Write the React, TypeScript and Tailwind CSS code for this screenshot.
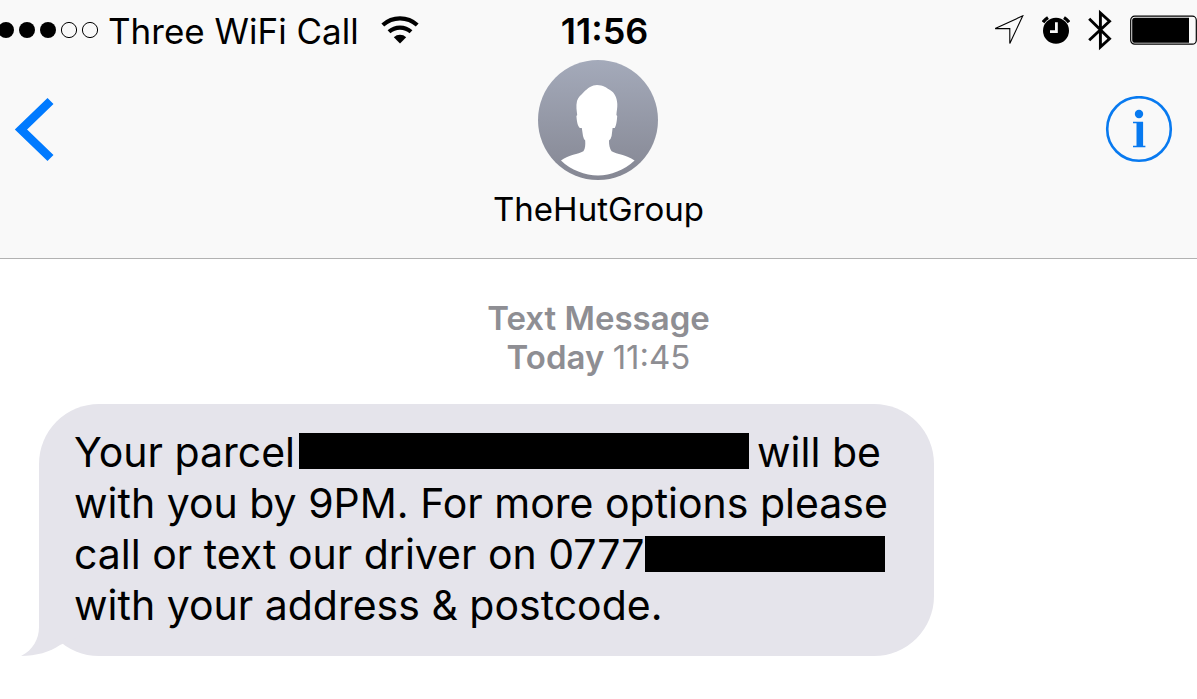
import React from "react";

function SignalDots() {
  return (
    <svg width="98" height="18" viewBox="0 0 98 18" role="img" aria-label="Signal strength, 3 of 5">
      <circle cx="6" cy="9" r="8" />
      <circle cx="27" cy="9" r="8" />
      <circle cx="48" cy="9" r="8" />
      <circle cx="69" cy="9" r="7.6" fill="none" stroke="#000" strokeWidth="1" />
      <circle cx="90" cy="9" r="7.6" fill="none" stroke="#000" strokeWidth="1" />
    </svg>
  );
}

function WifiIcon() {
  return (
    <svg width="38" height="28" viewBox="0 0 38 28" role="img" aria-label="WiFi">
      <path d="M1.8 9A25.5 25.5 0 0 1 36.2 9" fill="none" stroke="#000" strokeWidth="4.2" />
      <path d="M8 15.8A16.5 16.5 0 0 1 30 15.8" fill="none" stroke="#000" strokeWidth="4.2" />
      <path d="M19 27.4L12.8 21.2A9.4 9.4 0 0 1 25.2 21.2Z" />
    </svg>
  );
}

function LocationIcon() {
  return (
    <svg width="30" height="30" viewBox="0 0 30 30" role="img" aria-label="Location">
      <path d="M1.2 13.6L28.8 .8L15.8 28.4V13.6Z" fill="none" stroke="#000" strokeWidth="1.1" />
    </svg>
  );
}

function AlarmIcon() {
  return (
    <svg width="28" height="28" viewBox="0 0 28 28" role="img" aria-label="Alarm">
      <circle cx="14" cy="14.8" r="13" />
      <path d="M1 6.2A18 18 0 0 1 6 1.6M27 6.2A18 18 0 0 0 22 1.6" fill="none" stroke="#000" strokeWidth="3.4" />
      <path d="M14.4 6.2V15.6H8" fill="none" stroke="#f9f9f9" strokeWidth="2.8" />
    </svg>
  );
}

function BluetoothIcon() {
  return (
    <svg width="24" height="42" viewBox="0 0 24 42" role="img" aria-label="Bluetooth">
      <path d="M1.2 9.8L21.5 29.8L12.4 38V4L21.5 12.2L1.2 31.2" fill="none" stroke="#000" strokeWidth="2.9" />
    </svg>
  );
}

function BatteryIcon() {
  return (
    <svg width="67" height="30" viewBox="0 0 67 30" role="img" aria-label="Battery">
      <rect x=".7" y="1.2" width="65.6" height="28" rx="4" fill="none" stroke="#000" strokeWidth="1.2" />
      <path d="M5 2.7H59V27.7H5Q2.2 27.7 2.2 24.9V5.5Q2.2 2.7 5 2.7Z" />
    </svg>
  );
}

function Avatar() {
  return (
    <svg width="120" height="120" viewBox="0 0 120 120" role="img" aria-label="Contact photo">
      <defs>
        <linearGradient id="avatarFill" x1="0" y1="0" x2="0" y2="1">
          <stop offset="0" stopColor="#a4aaba" />
          <stop offset="1" stopColor="#858793" />
        </linearGradient>
      </defs>
      <circle cx="60" cy="60" r="60" fill="url(#avatarFill)" />
      <path
        fill="#fff"
        d="M59 25C65 25 69 28 72 30C77 33 79 38 79.3 44C79.5 48 78.6 51 78.4 55L79.2 56C79 61 78 66 76.8 68H74.6L73.6 76Q73 79 71 80.4C71 85 71.6 88 73.6 91.2C79 94.4 88 94.6 96.6 100.4C86 110 73 115.4 60 115.4C47 115.4 33 110 23 100.4C31 94.6 40 94.4 45.4 91.2C47.4 88 47.4 85 47.2 80.4Q45.6 79 45 76L43.8 68H41.8C39.6 66 38.8 61 38.4 56L39.2 55C38.8 51 37.8 46 39 41C40 37 43 35 45.4 32.4C50 28 54 25 59 25Z"
      />
    </svg>
  );
}

export default function App() {
  return (
    <div className="min-h-screen bg-white font-['Inter','Liberation_Sans',sans-serif] text-black">
      <header className="border-b border-[#b2b2b2] bg-[#f9f9f9]">
        <div className="grid h-15 grid-cols-[1fr_auto_1fr] items-center text-[35px] leading-10 whitespace-nowrap">
          <div className="flex items-center gap-2.5">
            <SignalDots />
            <span className="pt-0.5">Three WiFi Call</span>
            <span className="pl-3">
              <WifiIcon />
            </span>
          </div>
          <time className="pt-0.5 pl-3 text-4xl leading-10 font-semibold">11:56</time>
          <div className="flex items-center justify-end gap-4.5">
            <LocationIcon />
            <AlarmIcon />
            <BluetoothIcon />
            <BatteryIcon />
          </div>
        </div>

        <div className="grid grid-cols-[1fr_auto_1fr] items-start">
          <button type="button" aria-label="Back" className="mt-9 ml-3.5 justify-self-start">
            <svg width="40" height="66" viewBox="0 0 40 66">
              <path d="M36.5 5L7 33.5L36.5 62" fill="none" stroke="#007aff" strokeWidth="8.6" />
            </svg>
          </button>
          <div className="flex flex-col items-center gap-2 pb-7">
            <Avatar />
            <h1 className="text-[33px] leading-[42px]">TheHutGroup</h1>
          </div>
          <button type="button" aria-label="Details" className="mt-9 mr-6 justify-self-end">
            <svg width="68" height="68" viewBox="0 0 68 68" fill="none" stroke="#087af0">
              <circle cx="34" cy="33" r="31.8" strokeWidth="2.6" />
              <circle cx="34" cy="18" r="4.2" fill="#087af0" stroke="none" />
              <path d="M34.8 26V50.5" strokeWidth="6.6" />
              <path d="M28 26.6H38M28 50.4H40.4" strokeWidth="1.5" />
            </svg>
          </button>
        </div>
      </header>

      <main>
        <p className="pt-10 text-center text-[33px] leading-[39px] font-semibold text-[#8e8e93]">
          Text Message
          <br />
          Today <time className="font-normal">11:45</time>
        </p>

        <div className="relative mt-[27px] ml-[39px] w-fit rounded-[60px] bg-[#e5e4eb] pt-[23px] pr-[46px] pb-[25px] pl-[35px]">
          <svg className="absolute bottom-0 -left-4.5" width="60" height="60" viewBox="0 0 60 60" aria-hidden="true">
            <path d="M18 0V31C18 43 12 54 0 60C15 60 29 56 39 49L60 40V0Z" fill="#e5e4eb" />
          </svg>
          <p className="relative text-[41px] leading-[51px] whitespace-nowrap">
            Your parcel
            <span className="mr-2 ml-1 inline-block h-9 w-[450px] bg-black align-[-2px]" />
            will be
            <br />
            with you by 9PM. For more options please
            <br />
            call or text our driver on 0777
            <span className="inline-block h-9 w-60 bg-black align-[-3px]" />
            <br />
            with your address &amp; postcode.
          </p>
        </div>
      </main>
    </div>
  );
}
